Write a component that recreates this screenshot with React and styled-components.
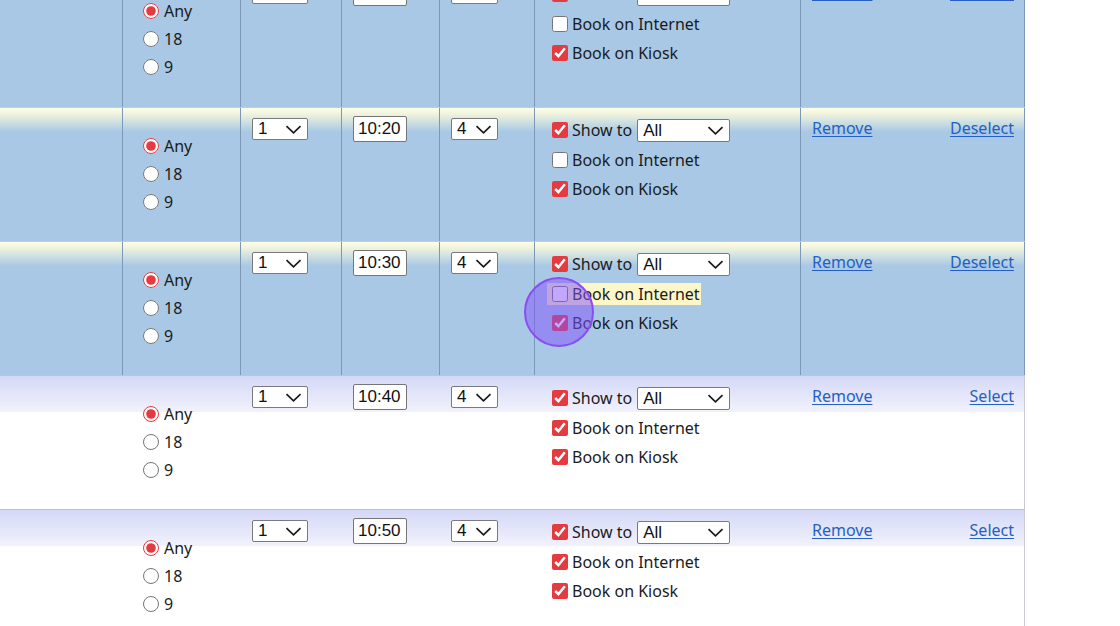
import React from 'react';
import styled, { createGlobalStyle } from 'styled-components';

const GlobalStyle = createGlobalStyle`
  html, body {
    margin: 0;
    padding: 0;
    background: #ffffff;
    overflow: hidden;
  }
  body {
    font-family: "Noto Sans", "Open Sans", sans-serif;
    color: #1b1b1b;
  }
`;

const Page = styled.div`
  width: 1120px;
  height: 626px;
  overflow: hidden;
  position: relative;
`;

const Table = styled.div`
  width: 1025px;
  margin-top: -29px;
`;

const Row = styled.div`
  display: grid;
  grid-template-columns: 122px 118px 101px 98px 95px 266px 225px;
  height: ${(p) => (p.$tall ? 136 : 134)}px;
  box-sizing: border-box;
  border-top: 1px solid ${(p) => (p.$selected ? '#b9cfe3' : '#bfc3d2')};
  background-color: ${(p) => (p.$selected ? '#a8c8e5' : '#ffffff')};
  background-image: ${(p) =>
    p.$selected
      ? 'linear-gradient(to bottom, #fefee6 0px, #f6f8de 4px, #a8c8e5 24px)'
      : 'linear-gradient(to bottom, #d4d8f7 0px, #f1f2fc 36px)'};
  background-size: 100% ${(p) => (p.$selected ? '24px' : '36px')};
  background-repeat: no-repeat;
`;

const Cell = styled.div`
  box-sizing: border-box;
  border-left: 1px solid ${(p) => (p.$first ? 'transparent' : p.$selected ? '#7d98b6' : 'transparent')};
  ${(p) => p.$last && `border-right: 1px solid ${p.$selected ? '#7d98b6' : '#c9c9cf'};`}
  padding: 9px 0 0 11px;
`;

const RadioCell = styled(Cell)`
  display: flex;
  flex-direction: column;
  justify-content: center;
  padding: 0 0 2px 20px;
`;

const RadioOption = styled.label`
  display: flex;
  align-items: center;
  height: 28px;
  font-size: 16px;
`;

const Radio = styled.input`
  width: 16px;
  height: 16px;
  margin: 0 5px 0 0;
  accent-color: #e33b40;
`;

const SelectBox = styled.div`
  position: relative;
  display: inline-flex;
  width: ${(p) => p.$w}px;
  height: ${(p) => p.$h || 22}px;
  box-sizing: border-box;
  border: 1px solid #7a7a7a;
  border-radius: 2px;
  background: #ffffff;
`;

const NativeSelect = styled.select`
  appearance: none;
  border: none;
  background: transparent;
  width: 100%;
  height: 100%;
  padding: 0 0 0 5px;
  margin: 0;
  font-family: "Liberation Sans", Arial, sans-serif;
  font-size: 17px;
  color: #111;
  outline: none;
`;

const Chevron = styled.svg`
  position: absolute;
  right: 5px;
  top: 50%;
  margin-top: -4px;
  pointer-events: none;
`;

const TimeInput = styled.input`
  box-sizing: border-box;
  width: 54px;
  height: 26px;
  margin: -1px 0 0 0;
  border: 1px solid #767676;
  border-radius: 2px;
  padding: 0 0 0 4px;
  font-family: "Liberation Sans", Arial, sans-serif;
  font-size: 17px;
  color: #111;
  background: #ffffff;
`;

const OptionsCell = styled(Cell)`
  display: flex;
  flex-direction: column;
  padding: 7px 0 0 12px;
`;

const CheckLine = styled.div`
  display: flex;
  align-items: center;
  height: ${(p) => (p.$first ? 30 : 29.5)}px;
`;

const CheckLabel = styled.label`
  display: inline-flex;
  align-items: center;
  height: 22px;
  padding: 0 1px 0 5px;
  font-size: 16px;
  white-space: nowrap;
  background: ${(p) => (p.$hover ? '#fdf7c8' : 'transparent')};
`;

const Check = styled.input`
  width: 16px;
  height: 16px;
  margin: 0 4px 0 0;
  accent-color: #e33b40;
`;

const ShowText = styled.span`
  margin-right: 4px;
`;

const LinkCell = styled(Cell)`
  display: flex;
  justify-content: space-between;
  align-items: flex-start;
  padding: 9px 10px 0 11px;
`;

const ActionLink = styled.a`
  font-size: 16px;
  color: #2460c3;
  text-decoration: underline;
  text-underline-offset: 2px;
`;

const Cursor = styled.div`
  position: absolute;
  left: 524px;
  top: 277px;
  width: 66px;
  height: 66px;
  border-radius: 50%;
  border: 2px solid #8a4df3;
  background: rgba(132, 82, 251, 0.5);
  pointer-events: none;
`;

function Select({ w, h, value, options }) {
  return (
    <SelectBox $w={w} $h={h}>
      <NativeSelect defaultValue={value}>
        {options.map((o) => (
          <option key={o}>{o}</option>
        ))}
      </NativeSelect>
      <Chevron width="17" height="9" viewBox="0 0 17 9">
        <path d="M1.5 1.2 L8.5 7.8 L15.5 1.2" fill="none" stroke="#1a1a1a" strokeWidth="1.7" />
      </Chevron>
    </SelectBox>
  );
}

const rows = [
  { time: '10:10', selected: true, internet: false },
  { time: '10:20', selected: true, internet: false },
  { time: '10:30', selected: true, internet: false, hover: true },
  { time: '10:40', selected: false, internet: true },
  { time: '10:50', selected: false, internet: true },
];

function SessionRow({ row, index }) {
  const s = row.selected;
  return (
    <Row $selected={s} $tall={index === 0}>
      <Cell $first $selected={s} />
      <RadioCell $selected={s}>
        <RadioOption>
          <Radio type="radio" name={`holes-${index}`} defaultChecked />
          Any
        </RadioOption>
        <RadioOption>
          <Radio type="radio" name={`holes-${index}`} />
          18
        </RadioOption>
        <RadioOption>
          <Radio type="radio" name={`holes-${index}`} />
          9
        </RadioOption>
      </RadioCell>
      <Cell $selected={s}>
        <Select w={56} value="1" options={['1', '2', '3', '4']} />
      </Cell>
      <Cell $selected={s}>
        <TimeInput type="text" defaultValue={row.time} />
      </Cell>
      <Cell $selected={s}>
        <Select w={47} value="4" options={['1', '2', '3', '4']} />
      </Cell>
      <OptionsCell $selected={s}>
        <CheckLine $first>
          <CheckLabel>
            <Check type="checkbox" defaultChecked />
            <ShowText>Show to</ShowText>
          </CheckLabel>
          <Select w={93} h={23} value="All" options={['All', 'Members', 'Guests']} />
        </CheckLine>
        <CheckLine>
          <CheckLabel $hover={row.hover}>
            <Check type="checkbox" defaultChecked={row.internet} />
            Book on Internet
          </CheckLabel>
        </CheckLine>
        <CheckLine>
          <CheckLabel>
            <Check type="checkbox" defaultChecked />
            Book on Kiosk
          </CheckLabel>
        </CheckLine>
      </OptionsCell>
      <LinkCell $last $selected={s}>
        <ActionLink href="#0">Remove</ActionLink>
        <ActionLink href="#0">{s ? 'Deselect' : 'Select'}</ActionLink>
      </LinkCell>
    </Row>
  );
}

export default function App() {
  return (
    <Page>
      <GlobalStyle />
      <Table>
        {rows.map((r, i) => (
          <SessionRow key={r.time} row={r} index={i} />
        ))}
      </Table>
      <Cursor />
    </Page>
  );
}
